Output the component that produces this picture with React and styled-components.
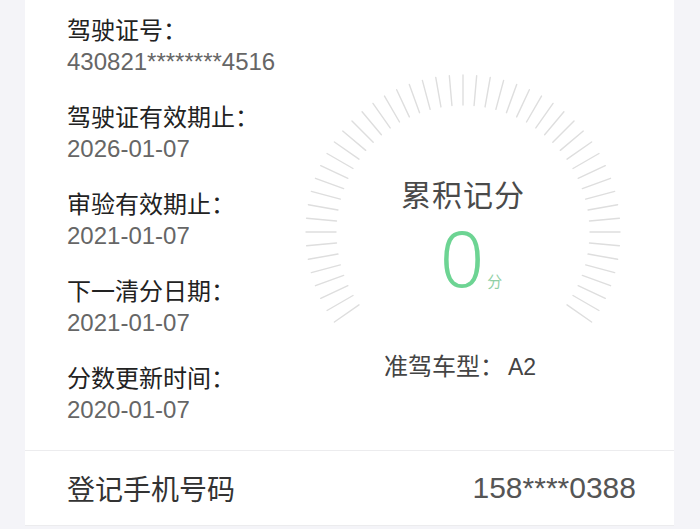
import React from 'react'
import styled, { createGlobalStyle } from 'styled-components'

const GlobalStyle = createGlobalStyle`
  html, body {
    margin: 0;
    padding: 0;
    background: #f4f4f8;
  }
  body {
    font-family: "Noto Sans", "Noto Sans CJK SC", sans-serif;
  }
`

const items = [
  { label: '驾驶证号：', value: '430821********4516' },
  { label: '驾驶证有效期止：', value: '2026-01-07' },
  { label: '审验有效期止：', value: '2021-01-07' },
  { label: '下一清分日期：', value: '2021-01-07' },
  { label: '分数更新时间：', value: '2020-01-07' },
]

function Dial() {
  const ticks = []
  const cx = 165
  const cy = 165
  for (let i = 0; i <= 50; i++) {
    const a = ((-125 + i * 5) * Math.PI) / 180
    const s = Math.sin(a)
    const c = Math.cos(a)
    ticks.push(
      <line
        key={i}
        x1={cx + s * 127}
        y1={cy - c * 127}
        x2={cx + s * 157}
        y2={cy - c * 157}
        stroke="#dedede"
        strokeWidth="1.4"
        strokeLinecap="round"
      />
    )
  }
  return (
    <DialSvg width="330" height="330" viewBox="0 0 330 330">
      {ticks}
    </DialSvg>
  )
}

export default function App() {
  return (
    <Page>
      <GlobalStyle />
      <Card>
        <Content>
          <InfoList>
            {items.map((it) => (
              <Item key={it.label}>
                <Label>{it.label}</Label>
                <Value>{it.value}</Value>
              </Item>
            ))}
          </InfoList>
          <Gauge>
            <Dial />
            <GaugeTitle>累积记分</GaugeTitle>
            <Score>
              <Big>0</Big>
              <Unit>分</Unit>
            </Score>
            <License>
              准驾车型：<Code>A2</Code>
            </License>
          </Gauge>
        </Content>
        <PhoneRow>
          <PhoneLabel>登记手机号码</PhoneLabel>
          <PhoneValue>158****0388</PhoneValue>
        </PhoneRow>
      </Card>
    </Page>
  )
}

const Page = styled.div`
  width: 700px;
  height: 529px;
  overflow: hidden;
  background: #f4f4f8;
  display: flex;
  justify-content: center;
`

const Card = styled.div`
  width: 649px;
  margin-left: -1px;
  background: #fff;
  display: flex;
  flex-direction: column;
  align-self: flex-start;
`

const Content = styled.div`
  display: flex;
  padding: 14px 0 24px 42px;
  border-bottom: 1px solid #ececee;
`

const InfoList = styled.div`
  flex: 1;
  display: flex;
  flex-direction: column;
  gap: 23px;
`

const Item = styled.div`
  display: flex;
  flex-direction: column;
`

const Label = styled.div`
  font-size: 24px;
  line-height: 32px;
  color: #222;
`

const Value = styled.div`
  font-family: "Liberation Sans", "Noto Sans", sans-serif;
  font-size: 24px;
  line-height: 32px;
  color: #666;
`

const Gauge = styled.div`
  position: relative;
  width: 330px;
  height: 330px;
  margin: 53px 46px 0 0;
  display: flex;
  flex-direction: column;
  align-items: center;
`

const DialSvg = styled.svg`
  position: absolute;
  left: 0;
  top: 0;
`

const GaugeTitle = styled.div`
  margin-top: 110px;
  font-size: 30px;
  line-height: 36px;
  color: #4a4a4a;
  letter-spacing: 1px;
`

const Score = styled.div`
  display: flex;
  align-items: flex-end;
  height: 84px;
  margin-top: 2px;
  padding-left: 16px;
`

const Big = styled.div`
  font-size: 78px;
  line-height: 84px;
  font-weight: 300;
  color: #6dd493;
`

const Unit = styled.div`
  font-size: 15px;
  line-height: 20px;
  color: #8fcfa5;
  margin: 0 0 8px 3px;
`

const License = styled.div`
  margin-top: 52px;
  margin-left: -6px;
  font-size: 24px;
  line-height: 30px;
  color: #444;
`

const Code = styled.span`
  font-family: "Liberation Sans", "Noto Sans", sans-serif;
  font-size: 23px;
  margin-left: 4px;
`

const PhoneRow = styled.div`
  height: 74px;
  display: flex;
  align-items: center;
  justify-content: space-between;
  padding: 0 38px 0 42px;
  border-bottom: 1px solid #ececee;
`

const PhoneLabel = styled.div`
  font-size: 28px;
  color: #333;
`

const PhoneValue = styled.div`
  font-family: "Liberation Sans", "Noto Sans", sans-serif;
  font-size: 30px;
  color: #555;
`
